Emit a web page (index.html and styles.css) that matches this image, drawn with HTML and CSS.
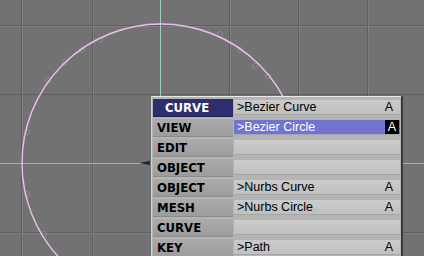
FILE: index.html
```html
<!DOCTYPE html>
<html lang="en">
<head>
    <meta charset="UTF-8">
    <title>3D View - Add Curve</title>
    <link rel="stylesheet" href="styles.css">
</head>
<body>
    <div class="viewport">
        <svg class="grid" width="424" height="256" viewBox="0 0 424 256">
            <g stroke="#5e5e5e" stroke-width="1">
                <line x1="21.5" y1="0" x2="21.5" y2="256"/>
                <line x1="92.5" y1="0" x2="92.5" y2="256"/>
                <line x1="229.5" y1="0" x2="229.5" y2="256"/>
                <line x1="298.5" y1="0" x2="298.5" y2="256"/>
                <line x1="367.5" y1="0" x2="367.5" y2="256"/>
                <line x1="0" y1="25.5" x2="424" y2="25.5"/>
                <line x1="0" y1="94.5" x2="424" y2="94.5"/>
                <line x1="0" y1="232.5" x2="424" y2="232.5"/>
            </g>
            <g stroke="#7e7e7e" stroke-width="1">
                <line x1="22.5" y1="0" x2="22.5" y2="256"/>
                <line x1="93.5" y1="0" x2="93.5" y2="256"/>
                <line x1="230.5" y1="0" x2="230.5" y2="256"/>
                <line x1="299.5" y1="0" x2="299.5" y2="256"/>
                <line x1="368.5" y1="0" x2="368.5" y2="256"/>
                <line x1="0" y1="26.5" x2="424" y2="26.5"/>
                <line x1="0" y1="233.5" x2="424" y2="233.5"/>
            </g>
            <line x1="160.5" y1="0" x2="160.5" y2="256" stroke="#9ad0c0"/>
            <line x1="164.5" y1="0" x2="164.5" y2="256" stroke="#806a6a"/>
            <line x1="0" y1="163.5" x2="424" y2="163.5" stroke="#d89aa8"/>
            <g fill="none" stroke="#8a8a8a" stroke-width="1">
                <circle cx="100" cy="40" r="2.5"/>
                <circle cx="82" cy="50" r="2.5"/>
                <circle cx="65" cy="62" r="2.5"/>
                <circle cx="48" cy="80" r="2.5"/>
                <circle cx="27" cy="132" r="2.5"/>
                <circle cx="27" cy="194" r="2.5"/>
                <circle cx="44" cy="234" r="2.5"/>
                <circle cx="220" cy="34" r="2.5"/>
                <circle cx="240" cy="50" r="2.5"/>
                <circle cx="255" cy="66" r="2.5"/>
                <circle cx="268" cy="76" r="2.5"/>
            </g>
            <circle cx="161" cy="163" r="139" fill="none" stroke="#ecc0ec" stroke-width="1.4"/>
            <path d="M139 163 L150 161 L150 165 Z" fill="#222"/>
        </svg>

        <div class="menu">
            <div class="row">
                <div class="label title">CURVE</div>
                <div class="item"><span>&gt;Bezier Curve</span><span class="key">A</span></div>
            </div>
            <div class="row">
                <div class="label">VIEW</div>
                <div class="item active"><span>&gt;Bezier Circle</span><span class="key">A</span></div>
            </div>
            <div class="row">
                <div class="label">EDIT</div>
                <div class="item"></div>
            </div>
            <div class="row">
                <div class="label">OBJECT</div>
                <div class="item"></div>
            </div>
            <div class="row">
                <div class="label">OBJECT</div>
                <div class="item"><span>&gt;Nurbs Curve</span><span class="key">A</span></div>
            </div>
            <div class="row">
                <div class="label">MESH</div>
                <div class="item"><span>&gt;Nurbs Circle</span><span class="key">A</span></div>
            </div>
            <div class="row">
                <div class="label">CURVE</div>
                <div class="item"></div>
            </div>
            <div class="row">
                <div class="label">KEY</div>
                <div class="item"><span>&gt;Path</span><span class="key">A</span></div>
            </div>
        </div>
    </div>
</body>
</html>
```

FILE: styles.css
```css
body {
    margin: 0;
    padding: 0;
    background: #727272;
    font-family: "Liberation Sans", Arial, sans-serif;
}
.viewport {
    position: relative;
    width: 424px;
    height: 256px;
    overflow: hidden;
    background: #727272;
}
.grid {
    position: absolute;
    left: 0;
    top: 0;
}
.menu {
    position: absolute;
    left: 151px;
    top: 96px;
    width: 249px;
    background: #b4b4b4;
    border-top: 1px solid #e8e8e8;
    border-left: 1px solid #d0d0d0;
    box-shadow: 2px 0 0 #3a3a3a;
    padding-top: 1px;
}
.row {
    display: flex;
    height: 20px;
}
.label {
    width: 76px;
    margin: 1px;
    padding-left: 4px;
    background: linear-gradient(#ababab, #9c9c9c);
    border-bottom: 1px solid #8a8a8a;
    font-family: "DejaVu Sans Condensed", "DejaVu Sans", sans-serif;
    font-weight: bold;
    font-size: 13px;
    line-height: 18px;
    color: #000;
}
.label.title {
    background: #2e2e6e;
    border-bottom-color: #20204a;
    color: #fff;
    padding-left: 12px;
    width: 68px;
}
.item {
    flex: 1;
    display: flex;
    justify-content: space-between;
    align-items: center;
    margin: 2px 1px 3px 0;
    padding: 0 4px 0 3px;
    background: linear-gradient(#cbcbcb, #c0c0c0);
    border-bottom: 1px solid #a6a6a6;
    font-size: 12.5px;
    color: #000;
}
.item.active {
    background: #7272d0;
    color: #fff;
    padding-right: 1px;
}
.key {
    padding: 0 3px;
}
.item.active .key {
    background: #000;
    color: #fff;
    line-height: 14px;
}
```
